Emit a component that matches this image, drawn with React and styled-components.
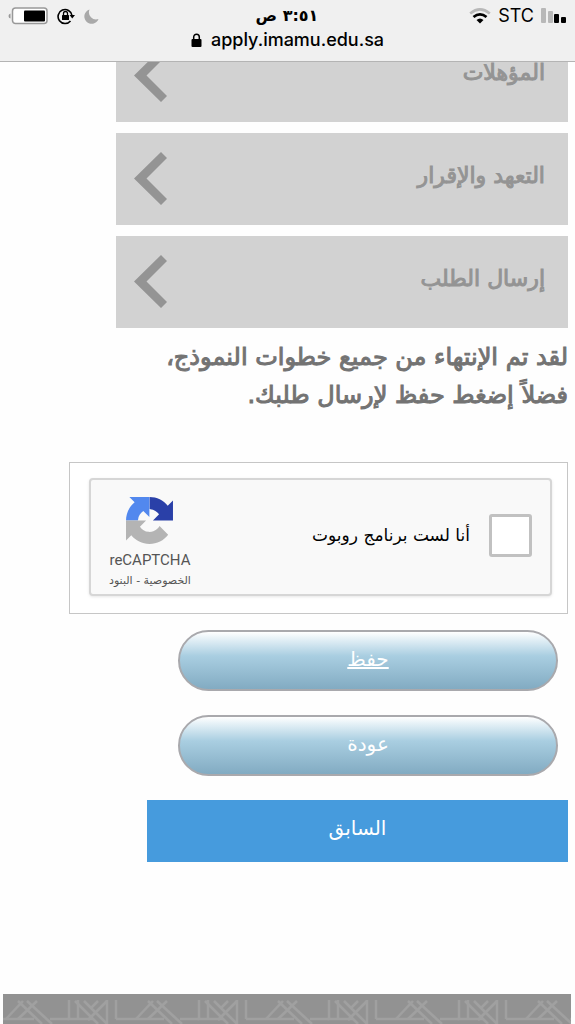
import React from 'react';
import styled, { createGlobalStyle } from 'styled-components';

const GlobalStyle = createGlobalStyle`
  *, *::before, *::after {
    box-sizing: border-box;
  }
  body {
    margin: 0;
    background: #fefefe;
    font-family: 'DejaVu Sans', sans-serif;
  }
`;

const Page = styled.div`
  display: flex;
  flex-direction: column;
  min-height: 100vh;
  padding-top: 30px;
`;

const BrowserBar = styled.header`
  position: fixed;
  top: 0;
  left: 0;
  right: 0;
  z-index: 1;
  height: 62px;
  padding-top: 4px;
  background: #f0f0f0;
  border-bottom: 1px solid #b4b4b4;
  color: #000;
`;

const StatusRow = styled.div`
  display: grid;
  grid-template-columns: 1fr auto 1fr;
  align-items: center;
  height: 24px;
  padding: 0 9px 0 8px;
`;

const StatusGroup = styled.div`
  display: flex;
  align-items: center;
  justify-content: ${({ $end }) => ($end ? 'flex-end' : 'flex-start')};
  gap: ${({ $end }) => ($end ? '7px' : '9px')};
  font: 400 18px/24px Inter, sans-serif;
`;

const Clock = styled.time`
  font-size: 16px;
  font-weight: 700;
  line-height: 24px;
`;

const Address = styled.div`
  display: flex;
  align-items: center;
  justify-content: center;
  gap: 9px;
  font: 500 18px/24px Inter, sans-serif;
`;

const Main = styled.main`
  flex: 1;
  display: flex;
  flex-direction: column;
  padding: 0 7px 132px;
`;

const Steps = styled.nav`
  display: flex;
  flex-direction: column;
  gap: 11px;
  margin-left: 109px;
`;

const StepLink = styled.a`
  display: flex;
  align-items: center;
  justify-content: space-between;
  height: 92px;
  padding: 0 23px 2px 18px;
  background: #d2d2d2;
  color: #949494;
  font-size: 22px;
  line-height: 32px;
  text-decoration: none;

  span {
    padding-bottom: 4px;
    -webkit-text-stroke: 1px #949494;
  }
`;

const Message = styled.p`
  margin: 10px 0 48px;
  color: #737373;
  font-size: 24px;
  line-height: 38px;
  -webkit-text-stroke: 1px #737373;
`;

const CaptchaFrame = styled.section`
  margin-left: 62px;
  padding: 15px 15px 17px 19px;
  border: 1px solid #c6c6c6;
  background: #fff;
`;

const Captcha = styled.div`
  display: flex;
  align-items: center;
  justify-content: space-between;
  height: 118px;
  padding: 0 18px 4px 18px;
  border: 2px solid #d6d6d6;
  border-radius: 4px;
  background: #f9f9f9;
  box-shadow: 0 1px 3px rgba(0, 0, 0, 0.1);
`;

const RobotLabel = styled.label`
  display: flex;
  align-items: center;
  gap: 19px;
  color: #000;
  font-size: 17px;
`;

const Checkbox = styled.input`
  appearance: none;
  width: 43px;
  height: 43px;
  margin: 0;
  border: 3px solid #c1c1c1;
  border-radius: 3px;
  background: #fff;
`;

const CaptchaBrand = styled.div`
  display: flex;
  flex-direction: column;
  align-items: center;
  padding-top: 16px;
  color: #555;

  strong {
    margin: 6px 0 2px;
    font: 400 15px/20px Roboto, sans-serif;
  }
`;

const Terms = styled.div`
  font-size: 11px;
  line-height: 18px;

  a {
    color: inherit;
    text-decoration: none;
  }
`;

const Actions = styled.div`
  display: flex;
  flex-direction: column;
  gap: 24px;
  margin: 16px 10px 24px 171px;
  direction: ltr;
`;

const PillButton = styled.button`
  height: 61px;
  padding: 0 0 4px;
  border: 2px solid #a9a9ad;
  border-radius: 31px;
  background: linear-gradient(#fff 0%, #e9f3f8 10%, #a9cee1 42%, #82abc2 100%);
  color: #fff;
  font-family: inherit;
  font-size: 20px;
  text-decoration: ${({ $underlined }) => ($underlined ? 'underline' : 'none')};
`;

const PreviousButton = styled.button`
  height: 62px;
  margin-left: 140px;
  padding: 0 0 6px;
  border: 0;
  background: #469bdd;
  color: #fff;
  font-family: inherit;
  font-size: 20px;
`;

const Footer = styled.footer`
  height: 30px;
  margin: 0 4px 0 3px;
  background: #929292;
  direction: ltr;

  svg {
    display: block;
  }
`;

const Battery = () => (
  <svg width="40" height="18" viewBox="0 0 40 18" aria-hidden="true">
    <path d="M2.5 6.5Q.5 7 .5 9t2 2.500Z" fill="#999" />
    <rect x="4.500" y="1" width="34.500" height="15.500" rx="3" fill="#fff" stroke="#999" strokeWidth="1.500" />
    <rect x="16" y="3.500" width="21" height="11" rx="1" fill="#000" />
  </svg>
);

const RotationLock = () => (
  <svg width="18" height="18" viewBox="0 0 18 18" fill="none" stroke="#000" aria-hidden="true">
    <path d="M13.500 14A7 7 0 1 1 15 8.500" strokeWidth="1.600" />
    <path d="M12.500 8H18l-2.750 3.500Z" fill="#000" stroke="none" />
    <rect x="5" y="8" width="7" height="5" rx=".5" fill="#000" stroke="none" />
    <path d="M6.500 8V6.500a2 2 0 0 1 4 0V8" strokeWidth="1.300" />
  </svg>
);

const Moon = () => (
  <svg width="15" height="15" viewBox="0 0 15 15" aria-hidden="true">
    <path d="M5.500.5A7.300 7.300 0 1 0 14.500 10 7.200 7.200 0 0 1 5.500.5Z" fill="#a9a9a9" />
  </svg>
);

const Wifi = () => (
  <svg width="22" height="16" viewBox="0 0 22 16" fill="none" aria-hidden="true">
    <path d="M1.200 5.500Q11-2.600 20.800 5.500" stroke="#b8b8b8" strokeWidth="2.600" />
    <path d="M4.500 9Q11 3.700 17.500 9" stroke="#000" strokeWidth="2.800" />
    <path d="M7.500 12Q11 9 14.500 12L11 15.500Z" fill="#000" />
  </svg>
);

const Signal = () => (
  <svg width="25" height="16" viewBox="0 0 25 16" aria-hidden="true">
    <rect x="0" y="0" width="5" height="15" rx="1" fill="#b8b8b8" />
    <rect x="7" y="3" width="5" height="12" rx="1" fill="#b8b8b8" />
    <rect x="13" y="6" width="5" height="9" rx="1" fill="#000" />
    <rect x="20" y="9" width="5" height="6" rx="1" fill="#000" />
  </svg>
);

const Padlock = () => (
  <svg width="11" height="14" viewBox="0 0 11 14" aria-hidden="true">
    <rect x=".5" y="6" width="10" height="8" rx="1" />
    <path d="M2.700 7V4a2.800 2.800 0 0 1 5.600 0v3" fill="none" stroke="#000" strokeWidth="1.500" />
  </svg>
);

const Chevron = () => (
  <svg width="33" height="53" viewBox="0 0 33 53" aria-hidden="true">
    <polygon points="27,0 33,6 12.500,26.500 33,47 27,53 0,26.500" fill="#949494" />
  </svg>
);

const RecaptchaLogo = () => (
  <svg width="47" height="47" viewBox="0 0 64 64" aria-hidden="true">
    <path fill="#2a40a8" d="M64 31.955l-.033-1.370V4.687l-7.160 7.160C50.948 4.674 42.033.093 32.050.093v16.260c.485 0 .860.057 1.135.163 4.976.393 9.288 3.140 11.828 7.124l-8.307 8.307L64 31.953" />
    <path fill="#5288ee" d="M31.862.094l-1.370.033H4.594l7.160 7.160C4.580 13.147 0 22.060 0 32.046h16.260c0-.485.057-.860.163-1.135.393-4.976 3.140-9.288 7.124-11.828l8.307 8.307L31.860.095" />
    <path fill="#b4b4b4" d="M.001 32.045l.033 1.370v25.898l7.160-7.160c5.860 7.173 14.774 11.754 24.760 11.754 10.400 0 19.622-4.960 25.458-12.640l-11.736-11.860a15.550 15.550 0 0 1-4.754 5.334c-2.050 1.600-4.952 2.906-8.968 2.906-.485 0-.860-.057-1.135-.163-4.976-.393-9.288-3.140-11.828-7.124l8.307-8.307c-10.522.040-22.400.066-27.295-.005" />
  </svg>
);

const Lattice = () => (
  <svg width="100%" height="30" aria-hidden="true">
    <defs>
      <pattern id="lattice" width="130" height="30" patternUnits="userSpaceOnUse">
        <g fill="none" stroke="#a0a0a0" strokeWidth="2.500">
          <path d="M0 25H31M47 25H66M113 25H130" />
          <path d="M3 25L20 7M15 25L34 7M15 7L39 30M24 7L49 30" />
          <path d="M66 6V25H90M75 6V25M104 30V6M113 25V6" />
          <path d="M72 7L95 30M81 7L104 30M88 14L95 7M85 26L104 7" />
        </g>
      </pattern>
    </defs>
    <rect width="100%" height="30" fill="url(#lattice)" />
  </svg>
);

const steps = ['المؤهلات', 'التعهد والإقرار', 'إرسال الطلب'];

const PhoneHeader = () => (
  <BrowserBar dir="ltr">
    <StatusRow>
      <StatusGroup>
        <Battery />
        <RotationLock />
        <Moon />
      </StatusGroup>
      <Clock dir="rtl">٣:٥١ ص</Clock>
      <StatusGroup $end>
        <Wifi />
        <span>STC</span>
        <Signal />
      </StatusGroup>
    </StatusRow>
    <Address>
      <Padlock />
      <span>apply.imamu.edu.sa</span>
    </Address>
  </BrowserBar>
);

const CaptchaBox = () => (
  <CaptchaFrame>
    <Captcha>
      <RobotLabel htmlFor="robot">
        <Checkbox id="robot" type="checkbox" />
        أنا لست برنامج روبوت
      </RobotLabel>
      <CaptchaBrand>
        <RecaptchaLogo />
        <strong>reCAPTCHA</strong>
        <Terms>
          <a href="#privacy">الخصوصية</a> - <a href="#terms">البنود</a>
        </Terms>
      </CaptchaBrand>
    </Captcha>
  </CaptchaFrame>
);

export default function App() {
  return (
    <Page dir="rtl" lang="ar">
      <GlobalStyle />
      <PhoneHeader />
      <Main>
        <Steps>
          {steps.map((step) => (
            <StepLink href="#step" key={step}>
              <span>{step}</span>
              <Chevron />
            </StepLink>
          ))}
        </Steps>
        <Message>
          لقد تم الإنتهاء من جميع خطوات النموذج،
          <br />
          فضلاً إضغط حفظ لإرسال طلبك.
        </Message>
        <CaptchaBox />
        <Actions>
          <PillButton type="button" $underlined>حفظ</PillButton>
          <PillButton type="button">عودة</PillButton>
        </Actions>
        <PreviousButton type="button">السابق</PreviousButton>
      </Main>
      <Footer>
        <Lattice />
      </Footer>
    </Page>
  );
}
